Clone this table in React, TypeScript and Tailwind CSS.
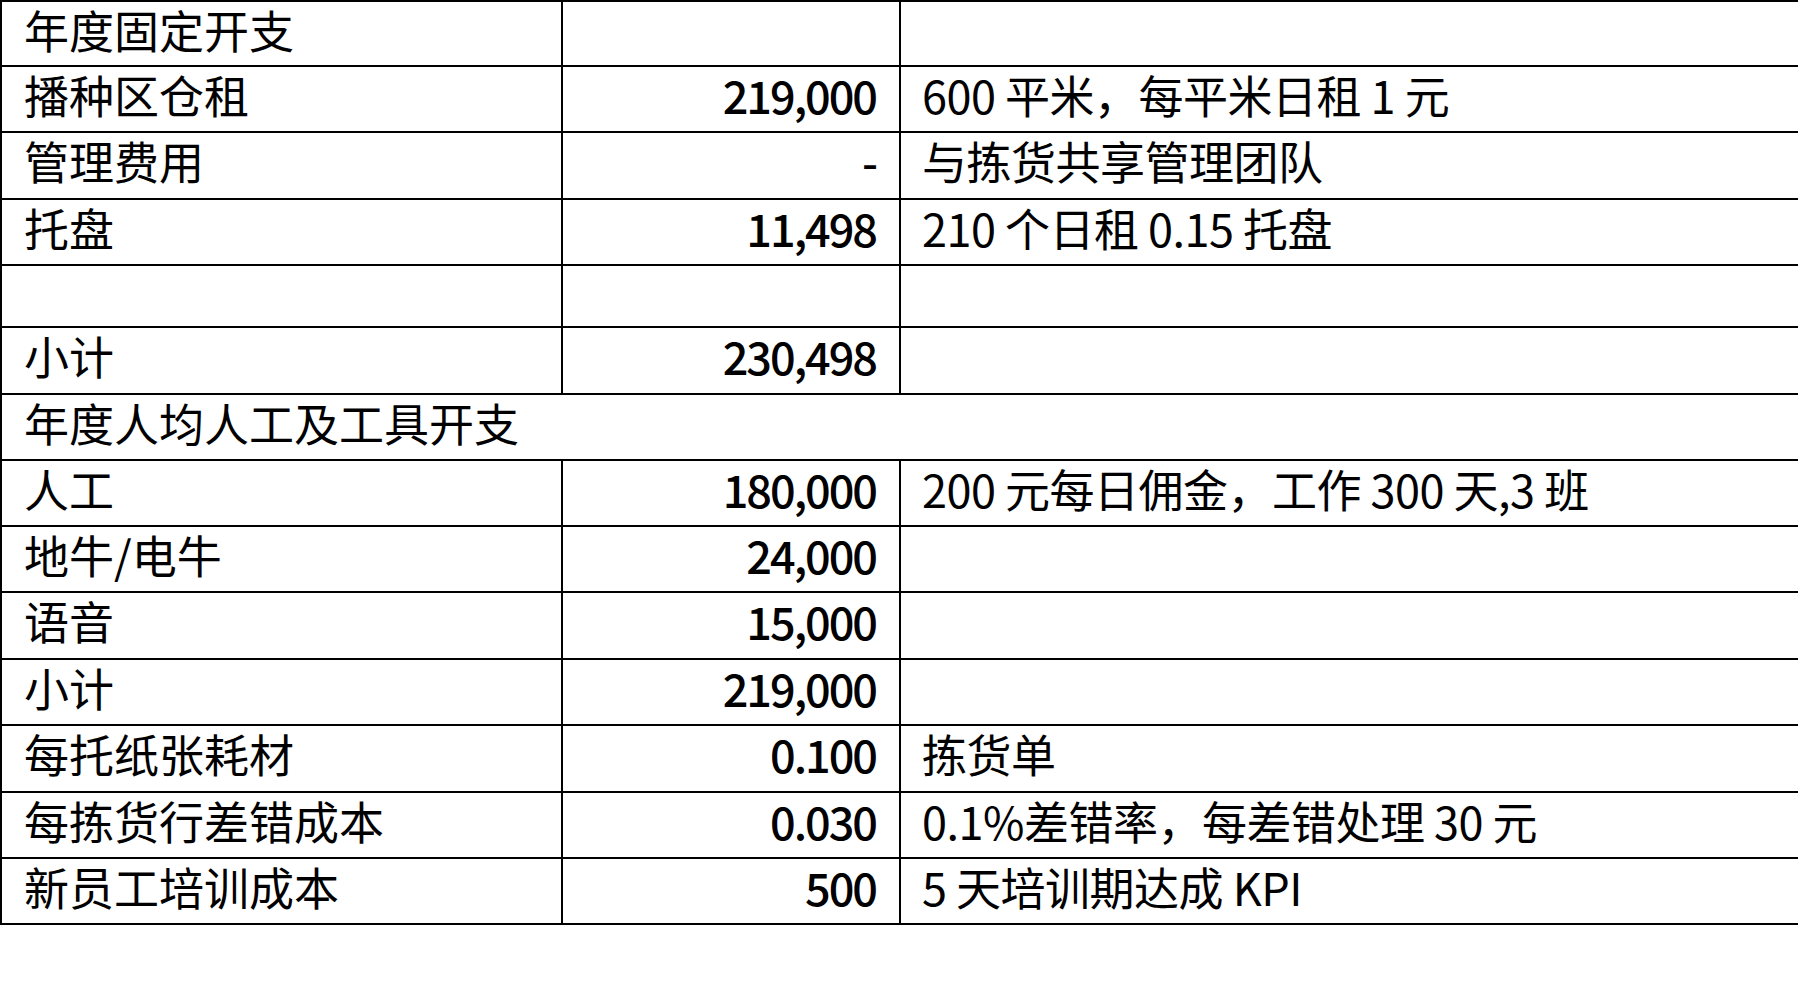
type Row = {
  label: string;
  amount?: string;
  note?: string;
  span?: boolean;
  h: string;
};

const rows: Row[] = [
  { label: "年度固定开支", h: "h-[65px]" },
  { label: "播种区仓租", amount: "219,000", note: "600 平米，每平米日租 1 元", h: "h-[66.4px]" },
  { label: "管理费用", amount: "-", note: "与拣货共享管理团队", h: "h-[66.4px]" },
  { label: "托盘", amount: "11,498", note: "210 个日租 0.15 托盘", h: "h-[66.4px]" },
  { label: "", h: "h-[62px]" },
  { label: "小计", amount: "230,498", h: "h-[66.4px]" },
  { label: "年度人均人工及工具开支", span: true, h: "h-[66.4px]" },
  { label: "人工", amount: "180,000", note: "200 元每日佣金，工作 300 天,3 班", h: "h-[66px]" },
  { label: "地牛/电牛", amount: "24,000", h: "h-[66.4px]" },
  { label: "语音", amount: "15,000", h: "h-[66.4px]" },
  { label: "小计", amount: "219,000", h: "h-[66.4px]" },
  { label: "每托纸张耗材", amount: "0.100", note: "拣货单", h: "h-[66.4px]" },
  { label: "每拣货行差错成本", amount: "0.030", note: "0.1%差错率，每差错处理 30 元", h: "h-[66.4px]" },
  { label: "新员工培训成本", amount: "500", note: "5 天培训期达成 KPI", h: "h-[66.4px]" },
];

export default function App() {
  return (
    <div className="min-h-screen w-full bg-white text-black font-['Noto_Sans_CJK_SC','Noto_Sans',sans-serif] text-[45px] leading-[48px]">
      <div className="flex flex-col border-t-2 border-l-2 border-black">
        {rows.map((r, i) =>
          r.span ? (
            <div key={i} className={`${r.h} flex border-b-2 border-black pt-[4px]`}>
              <div className="pl-[22px] whitespace-nowrap">{r.label}</div>
            </div>
          ) : (
            <div key={i} className={`${r.h} flex border-b-2 border-black`}>
              <div className="w-[561px] shrink-0 border-r-2 border-black pl-[22px] pt-[4px] whitespace-nowrap">{r.label}</div>
              <div className="w-[338px] shrink-0 border-r-2 border-black pr-[23px] pt-[4px] text-right font-medium tracking-[-2px] whitespace-nowrap">{r.amount}</div>
              <div className="flex-1 pl-[21px] pt-[4px] tracking-[-0.5px] whitespace-nowrap">{r.note}</div>
            </div>
          )
        )}
      </div>
    </div>
  );
}
